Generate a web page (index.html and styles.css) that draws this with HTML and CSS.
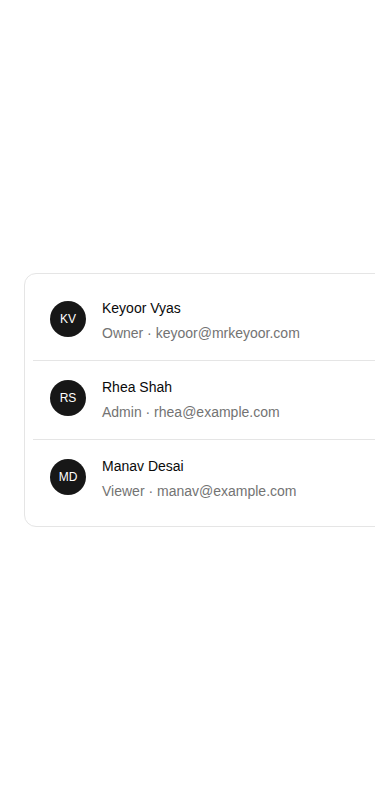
FILE: index.html
```html
<!DOCTYPE html>
<html lang="en">
<head>
<meta charset="utf-8">
<meta name="viewport" content="width=device-width, initial-scale=1">
<title>Members</title>
<link rel="stylesheet" href="styles.css">
</head>
<body>
<main class="page">
  <ul class="card">
    <li class="row">
      <span class="avatar">KV</span>
      <div class="info">
        <div class="name">Keyoor Vyas</div>
        <div class="meta">Owner · keyoor@mrkeyoor.com</div>
      </div>
    </li>
    <li class="row">
      <span class="avatar">RS</span>
      <div class="info">
        <div class="name">Rhea Shah</div>
        <div class="meta">Admin · rhea@example.com</div>
      </div>
    </li>
    <li class="row">
      <span class="avatar">MD</span>
      <div class="info">
        <div class="name">Manav Desai</div>
        <div class="meta">Viewer · manav@example.com</div>
      </div>
    </li>
  </ul>
</main>
</body>
</html>
```

FILE: styles.css
```css
html, body {
  margin: 0;
  padding: 0;
  background: #ffffff;
  overflow: hidden;
}

body {
  font-family: "Liberation Sans", Arial, sans-serif;
  color: #0a0a0a;
  width: 375px;
  height: 800px;
}

.page {
  height: 800px;
  display: flex;
  align-items: center;
  padding-left: 24px;
}

.card {
  list-style: none;
  margin: 0;
  padding: 8px;
  width: 420px;
  flex-shrink: 0;
  border: 1px solid #e5e5e5;
  border-radius: 12px;
  background: #ffffff;
  box-sizing: border-box;
}

.row {
  display: flex;
  align-items: flex-start;
  gap: 16px;
  padding: 16px 17px 17px;
  border-bottom: 1px solid #e5e5e5;
}

.row:last-child {
  border-bottom: none;
}

.avatar {
  width: 36px;
  height: 36px;
  margin-top: 3px;
  border-radius: 50%;
  background: #171717;
  color: #ffffff;
  font-size: 12px;
  display: flex;
  align-items: center;
  justify-content: center;
  flex-shrink: 0;
}

.info {
  display: flex;
  flex-direction: column;
  gap: 5px;
}

.name {
  font-size: 14px;
  line-height: 20px;
  color: #0a0a0a;
}

.meta {
  font-size: 14px;
  line-height: 20px;
  color: #737373;
}
```
